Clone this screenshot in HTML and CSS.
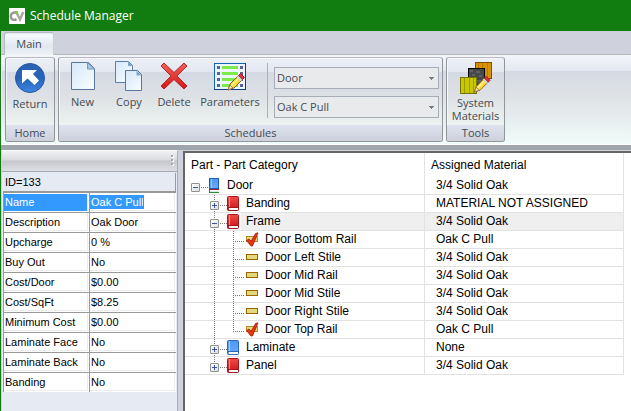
FILE: index.html
```
<!DOCTYPE html>
<html lang="en">
<head>
<meta charset="utf-8">
<title>Schedule Manager</title>
<link rel="stylesheet" href="styles.css">
</head>
<body>
<svg class="defs" aria-hidden="true">
  <defs>
    <linearGradient id="blue" x2="0" y2="1"><stop stop-color="#2c62b4"/><stop offset=".5" stop-color="#2562b8"/><stop offset="1" stop-color="#3f85e2"/></linearGradient>
    <linearGradient id="paper" x2="1" y2="1"><stop stop-color="#d4e8fb"/><stop offset="1" stop-color="#fafdff"/></linearGradient>
    <linearGradient id="red" x2="0" y2="1"><stop stop-color="#ee625b"/><stop offset="1" stop-color="#d61515"/></linearGradient>
    <linearGradient id="bookred" x2="0" y2="1"><stop stop-color="#f04c48"/><stop offset="1" stop-color="#c8141c"/></linearGradient>
    <linearGradient id="bookblue" x2="0" y2="1"><stop stop-color="#4e98f4"/><stop offset="1" stop-color="#69aaf8"/></linearGradient>
  </defs>
  <symbol id="book-red" viewBox="0 0 14 15"><rect x=".5" y=".5" width="11" height="14" rx="1" fill="url(#bookred)" stroke="#a5161b"/><path d="M2.5 1v11" stroke="#ff8a84"/><path d="M2 13h9" stroke="#fff" stroke-width="2"/><path d="M1 11.5h10" stroke="#a5161b"/></symbol>
  <symbol id="book-blue" viewBox="0 0 14 15"><rect x=".5" y=".5" width="11" height="14" rx="1" fill="url(#bookblue)" stroke="#2769bb"/><path d="M2.5 1v11" stroke="#a5ceff"/><path d="M2 13h9" stroke="#fff" stroke-width="2"/><path d="M1 11.5h10" stroke="#2769bb"/></symbol>
  <symbol id="book-stack" viewBox="0 0 14 15"><rect x="1.5" y=".5" width="9" height="10" fill="url(#bookblue)" stroke="#1d5fae"/><path d="M3.500 1v9" stroke="#9cc8ff"/><path d="M1 11.500h10" stroke="#a32035"/><path d="M1 12.500h9" stroke="#fff"/><path d="M1 14.500h10M1.500 12v3" stroke="#2d8b37"/><path d="M2 13.500h9" stroke="#dceadf"/></symbol>
  <symbol id="part" viewBox="0 0 14 15"><rect x="1.500" y="4.500" width="11" height="5" fill="#e2d87c" stroke="#9d6500"/></symbol>
  <symbol id="part-check" viewBox="0 0 14 15"><rect x="1.500" y="4.500" width="11" height="5" fill="#e2d87c" stroke="#b78a28"/><path d="M1.500 8.500L4 7l2.200 2.200L10.500 1.500 13 .8 7.500 14 6 14z" fill="#e43610" stroke="#a01c08" stroke-width=".8"/></symbol>
  <symbol id="pencil" viewBox="0 0 18 19"><path d="M1 18l2-6L12 3l4 4-9 9z" fill="#ffd936" stroke="#896118"/><path d="M1 18l2-5 3 3z" fill="#fbe0b0" stroke="#6b5b48" stroke-width=".6"/><path d="M4.500 13.500L13 5" stroke="#fff3a0" stroke-width="1.500"/><path d="M11.500 3.500l2-2 4 4-2 2z" fill="#df3036" stroke="#a91c28"/><path d="M10.500 4.500l4 4" stroke="#ccd5e0" stroke-width="2"/></symbol>
</svg>

<header class="titlebar">
  <svg class="app-icon" viewBox="0 0 16 16" aria-hidden="true"><rect width="16" height="16" fill="#fff"/><path d="M7.500 5.500C5.500 3.500 1.800 4.800 1.800 8.200S5.500 12.800 7.500 11" fill="none" stroke="#989890" stroke-width="2.400"/><path d="M8 5.500l3 6 3.200-7.500" fill="none" stroke="#aaa79b" stroke-width="2.400"/><path d="M6 3h3v3H6z" fill="#75d22c"/></svg>
  <h1>Schedule Manager</h1>
</header>
<nav class="tabs"><button class="tab" type="button">Main</button></nav>

<section class="ribbon" aria-label="Main">
  <div class="group">
    <div class="tools">
      <button class="tool return" type="button"><svg class="icon" viewBox="0 0 32 32"><circle cx="16" cy="16" r="14.500" fill="url(#blue)" stroke="#2657a0"/><path d="M8 8h15l-4 4 6 6.500-4.500 4.500-7-6.500-5.500 5z" fill="#fff"/></svg><span>Return</span></button>
    </div>
    <div class="caption">Home</div>
  </div>
  <div class="group">
    <div class="tools">
      <button class="tool new" type="button"><svg class="icon" viewBox="0 0 32 32"><path d="M4.500 2.500h17l6 6v21h-23z" fill="url(#paper)" stroke="#55779f"/><path d="M20.500 2.500v6.500h7z" fill="#a6c8e8" stroke="#7398be"/></svg><span>New</span></button>
      <button class="tool copy" type="button"><svg class="icon" viewBox="0 0 32 32"><path d="M2.500 1.500h13l4 4v17h-17z" fill="url(#paper)" stroke="#5a7fa9"/><path d="M15 1.500v4.500h4.500z" fill="#78a5cc"/><path d="M12.500 10.500h12l4 4v16h-16z" fill="url(#paper)" stroke="#55779f"/><path d="M23.500 10.500V15.500h5z" fill="#78a5cc"/></svg><span>Copy</span></button>
      <button class="tool delete" type="button"><svg class="icon" viewBox="0 0 32 32"><path d="M3 6l3-3 10 9.500L26 3l3 3-10 10 10 10-3 3-10-9.500L6 29l-3-3 10-10z" fill="url(#red)" stroke="#b52524"/></svg><span>Delete</span></button>
      <button class="tool params" type="button"><svg class="icon" viewBox="0 0 32 32"><rect x=".5" y="3.500" width="31" height="26" fill="#edf6ff" stroke="#1464b4"/><path d="M31.500 3v26.500H0" fill="none" stroke="#123e85"/><path d="M8 7.500h16M8 13.500h16M8 19.500h16M8 25.500h16" stroke="#7cea4b" stroke-width="3"/><path d="M3 7.500h3M3 13.500h3M3 19.500h3M3 25.500h3M26 7.500h3M26 13.500h3M26 19.500h3M26 25.500h3" stroke="#58619a" stroke-width="3"/><use href="#pencil" x="13" y="12" width="18" height="19"/></svg><span>Parameters</span></button>
      <div class="pickers">
        <select aria-label="Schedule type"><option>Door</option></select>
        <select aria-label="Schedule"><option>Oak C Pull</option></select>
      </div>
    </div>
    <div class="caption">Schedules</div>
  </div>
  <div class="group">
    <div class="tools">
      <button class="tool materials" type="button"><svg class="icon" viewBox="0 0 32 32"><rect x="15.500" y=".5" width="16" height="16" fill="#d79300" stroke="#805000"/><path d="M18.500 1v15M22.500 1v15M27.500 1v15" stroke="#bd7800"/><rect x="8.500" y="6.500" width="16" height="16" fill="#47484a" stroke="#050505"/><path d="M10 9h3m3 1h4m-8 3h3m4 1h3m-11 3h4m2 2h4M12 20h3" stroke="#777b80"/><rect x=".5" y="15.500" width="16" height="16" fill="#c9c800" stroke="#777300"/><path d="M4.500 16v15M9.500 16v15M13.500 16v15" stroke="#9c9c00"/><use href="#pencil" x="13" y="13" width="18" height="18"/></svg><span>System<br>Materials</span></button>
    </div>
    <div class="caption">Tools</div>
  </div>
</section>

<main class="workspace">
  <aside class="properties">
    <div class="grip" aria-hidden="true"><i></i><i></i><i></i></div>
    <h2 class="record">ID=133</h2>
    <table class="grid">
      <tbody>
        <tr class="active"><th scope="row"><label for="p0">Name</label></th><td><input id="p0" value="Oak C Pull"></td></tr>
        <tr><th scope="row"><label for="p1">Description</label></th><td><input id="p1" value="Oak Door"></td></tr>
        <tr><th scope="row"><label for="p2">Upcharge</label></th><td><input id="p2" value="0 %"></td></tr>
        <tr><th scope="row"><label for="p3">Buy Out</label></th><td><input id="p3" value="No"></td></tr>
        <tr><th scope="row"><label for="p4">Cost/Door</label></th><td><input id="p4" value="$0.00"></td></tr>
        <tr><th scope="row"><label for="p5">Cost/SqFt</label></th><td><input id="p5" value="$8.25"></td></tr>
        <tr><th scope="row"><label for="p6">Minimum Cost</label></th><td><input id="p6" value="$0.00"></td></tr>
        <tr><th scope="row"><label for="p7">Laminate Face</label></th><td><input id="p7" value="No"></td></tr>
        <tr><th scope="row"><label for="p8">Laminate Back</label></th><td><input id="p8" value="No"></td></tr>
        <tr><th scope="row"><label for="p9">Banding</label></th><td><input id="p9" value="No"></td></tr>
      </tbody>
    </table>
  </aside>

  <section class="parts">
    <table class="tree">
      <colgroup><col class="col-part"><col class="col-material"><col></colgroup>
      <thead><tr><th scope="col">Part - Part Category</th><th scope="col">Assigned Material</th><td></td></tr></thead>
      <tbody>
        <tr class="top"><td><div class="node root"><button class="toggle open" type="button" aria-label="Collapse Door"></button><i class="link"></i><svg class="glyph"><use href="#book-stack"/></svg><span>Door</span></div></td><td>3/4 Solid Oak</td><td></td></tr>
        <tr><td><div class="node branch"><button class="toggle" type="button" aria-label="Expand Banding"></button><i class="link"></i><svg class="glyph"><use href="#book-red"/></svg><span>Banding</span></div></td><td>MATERIAL NOT ASSIGNED</td><td></td></tr>
        <tr class="current"><td><div class="node branch"><button class="toggle open" type="button" aria-label="Collapse Frame"></button><i class="link"></i><svg class="glyph"><use href="#book-red"/></svg><span>Frame</span></div></td><td>3/4 Solid Oak</td><td></td></tr>
        <tr><td><div class="node leaf"><i class="elbow"></i><svg class="glyph"><use href="#part-check"/></svg><span>Door Bottom Rail</span></div></td><td>Oak C Pull</td><td></td></tr>
        <tr><td><div class="node leaf"><i class="elbow"></i><svg class="glyph"><use href="#part"/></svg><span>Door Left Stile</span></div></td><td>3/4 Solid Oak</td><td></td></tr>
        <tr><td><div class="node leaf"><i class="elbow"></i><svg class="glyph"><use href="#part"/></svg><span>Door Mid Rail</span></div></td><td>3/4 Solid Oak</td><td></td></tr>
        <tr><td><div class="node leaf"><i class="elbow"></i><svg class="glyph"><use href="#part"/></svg><span>Door Mid Stile</span></div></td><td>3/4 Solid Oak</td><td></td></tr>
        <tr><td><div class="node leaf"><i class="elbow"></i><svg class="glyph"><use href="#part"/></svg><span>Door Right Stile</span></div></td><td>3/4 Solid Oak</td><td></td></tr>
        <tr><td><div class="node leaf last"><i class="elbow"></i><svg class="glyph"><use href="#part-check"/></svg><span>Door Top Rail</span></div></td><td>Oak C Pull</td><td></td></tr>
        <tr><td><div class="node branch"><button class="toggle" type="button" aria-label="Expand Laminate"></button><i class="link"></i><svg class="glyph"><use href="#book-blue"/></svg><span>Laminate</span></div></td><td>None</td><td></td></tr>
        <tr><td><div class="node branch last"><button class="toggle" type="button" aria-label="Expand Panel"></button><i class="link"></i><svg class="glyph"><use href="#book-red"/></svg><span>Panel</span></div></td><td>3/4 Solid Oak</td><td></td></tr>
      </tbody>
    </table>
  </section>
</main>
</body>
</html>
```
FILE: styles.css
```
* { box-sizing: border-box; }

body {
  margin: 0;
  height: 100vh;
  display: flex;
  flex-direction: column;
  overflow: hidden;
  border-left: 1px solid #117d11;
  background: #cfd2dc;
  font: 11px/16px "Open Sans", "Noto Sans", sans-serif;
  color: #444b54;
}

button, input, select { font: inherit; color: inherit; }
button { padding: 0; border: 0; background: none; }
.defs { position: absolute; width: 0; height: 0; }

.titlebar {
  height: 31px;
  flex: none;
  display: flex;
  align-items: center;
  gap: 5px;
  padding-left: 8px;
  background: #117d11;
  color: #fff;
}
.titlebar h1 { margin: 0; font: 12px/16px "Open Sans", sans-serif; }
.app-icon { width: 16px; height: 16px; }

.tabs {
  height: 24px;
  flex: none;
  padding: 1px 3px 0;
  border-bottom: 1px solid #b5b9c0;
}
.tab {
  width: 50px;
  height: 23px;
  border: 1px solid #b2b9c3;
  border-right-color: #9fe3ea;
  border-bottom: 0;
  border-radius: 3px 3px 0 0;
  background: linear-gradient(#e9eaf0, #f4fafc 10%, #e2e7f0 60%, #edf3f7);
}

.ribbon {
  height: 90px;
  flex: none;
  display: flex;
  gap: 3px;
  padding: 2px 3px;
  border-left: 1px solid #fff;
  border-bottom: 1px solid #fff;
  background: linear-gradient(#f4f6fa, #e3e7f0 16px, #d5d9e4 16px, #dee2e5 40px, #e9f1f1 70px, #f0fcfa);
}
.group {
  display: flex;
  flex-direction: column;
  border: 1px solid #92959a;
  border-top-color: #b7babf;
  border-radius: 3px;
  box-shadow: inset 1px 1px #f5f7fa;
  background: linear-gradient(#edf0f6, #e3e7f0 14px, #d5d9e4 14px, #dee2e5 40px, #edf3f0 68px);
}
.tools { flex: 1; display: flex; }
.caption {
  height: 16px;
  text-align: center;
  border-radius: 0 0 2px 2px;
  background: linear-gradient(#dfe3ee, #cbd0d9);
}
.tool {
  display: flex;
  flex-direction: column;
  align-items: center;
  gap: 2px;
  padding-top: 2px;
}
.return { width: 48px; padding-top: 4px; }
.new { width: 47px; }
.copy { width: 46px; }
.delete { width: 44px; }
.params { width: 68px; }
.materials { width: 57px; line-height: 13px; padding-top: 4px; }
.icon { width: 32px; height: 32px; }
.pickers {
  display: flex;
  flex-direction: column;
  gap: 7px;
  margin: 5px 3px 0;
  padding: 4px 0 0 6px;
  height: 55px;
  border-left: 1px solid #abb0b8;
}
.pickers select {
  appearance: none;
  width: 165px;
  height: 22px;
  padding: 0 2px;
  border: 1px solid #a7adb6;
  border-radius: 0;
  background:
    linear-gradient(#777c82 0 0) no-repeat right 4px top 9px / 5px 1px,
    linear-gradient(#777c82 0 0) no-repeat right 5px top 10px / 3px 1px,
    linear-gradient(#777c82 0 0) no-repeat right 6px top 11px / 1px 1px,
    #e8eaeb;
}

.workspace {
  flex: 1;
  min-height: 0;
  display: flex;
  gap: 5px;
  padding-left: 1px;
  border-top: 5px solid #a0a5ad;
  color: #000;
  font-family: "Liberation Sans", Arial, sans-serif;
}
.properties {
  width: 176px;
  flex: none;
  border-top: 1px solid #f9fafa;
  border-right: 1px solid #a8acb6;
  background: #e6eaf3;
}
.grip {
  height: 21px;
  display: flex;
  flex-direction: column;
  align-items: flex-end;
  gap: 2px;
  padding: 4px 4px 0;
  border-bottom: 1px solid #a5a9af;
  background: linear-gradient(#f0f1f3, #d9dbdf 45%, #c5c7cd 50%, #dde0e4);
}
.grip i { width: 2px; height: 2px; background: #a5a9b0; box-shadow: 1px 1px #fff; }
.record {
  margin: 1px 1px 0;
  height: 19px;
  padding-left: 2px;
  border-right: 1px solid #999;
  border-bottom: 1px solid #999;
  font: 11px/18px "Liberation Sans", Arial, sans-serif;
}
.grid {
  width: 173px;
  margin-left: 1px;
  border-collapse: collapse;
  table-layout: fixed;
}
.grid th, .grid td {
  height: 20px;
  padding: 0 0 0 1px;
  border: 0;
  background: #fff;
  box-shadow: inset 1px 1px #999, inset -1px -1px #fff, inset -2px -2px #ececec;
  font-weight: normal;
  text-align: left;
}
.grid th { width: 86px; }
.grid label { display: block; margin: 1px 2px 1px 0; padding-left: 1px; line-height: 17px; }
.grid input {
  display: block;
  width: 82px;
  height: 16px;
  padding: 0 0 0 1px;
  border: 0;
  background: none;
  outline: 0;
}
.active label, .grid .active input { background: #3399ff; color: #fff; }
.grid .active input { width: 54px; height: 14px; border-right: 1px solid #d26a1f; }

.parts {
  flex: 1;
  min-width: 0;
  margin-top: 1px;
  border-top: 2px solid #666;
  border-left: 2px solid #666;
  background: #fff;
  font-size: 12px;
}
.tree {
  width: 100%;
  border-collapse: separate;
  border-spacing: 0;
  table-layout: fixed;
}
.col-part { width: 240px; }
.col-material { width: 199px; }
.tree th {
  height: 24px;
  padding: 0 6px;
  border-right: 1px solid #e2e2e2;
  font-weight: normal;
  text-align: left;
}
.tree td { padding: 0; }
.tree tbody td { height: 18px; border-bottom: 1px solid #e2e2e2; line-height: 17px; }
.tree tbody td:nth-child(3) { border-bottom: 0; }
.tree tbody td:nth-child(-n+2) { border-right: 1px solid #e2e2e2; }
.tree tbody td:nth-child(2) { padding-left: 11px; }
.current td:nth-child(2), .current .node span { background: #efefef; }
.node { display: flex; align-items: center; height: 17px; }
.node span { flex: 1; padding-left: 5px; }
.root { padding-left: 6px; }
.branch, .leaf { background: repeating-linear-gradient(#777 0 1px, #0000 1px 2px) no-repeat 29px 0 / 1px 18px; }
.branch { padding-left: 25px; }
.branch.last { background-size: 1px 6px; }
.leaf { padding-left: 48px; }
.toggle {
  width: 9px;
  height: 9px;
  flex: none;
  margin-top: 4px;
  border: 1px solid #919191;
  border-radius: 1px;
  background:
    linear-gradient(#3d55a5 0 0) no-repeat center / 5px 1px,
    linear-gradient(#3d55a5 0 0) no-repeat center / 1px 5px,
    linear-gradient(135deg, #fff, #ddd);
}
.toggle.open {
  background:
    linear-gradient(#3d55a5 0 0) no-repeat center / 5px 1px,
    linear-gradient(135deg, #fff, #ddd);
}
.link {
  width: 8px;
  height: 1px;
  margin-top: 4px;
  background: repeating-linear-gradient(90deg, #0000 0 1px, #777 1px 2px);
}
.elbow {
  width: 12px;
  height: 17px;
  background:
    repeating-linear-gradient(#777 0 1px, #0000 1px 2px) no-repeat 0 0 / 1px 100%,
    repeating-linear-gradient(90deg, #777 0 1px, #0000 1px 2px) no-repeat 0 10px / 11px 1px;
}
.last .elbow {
  background:
    repeating-linear-gradient(#777 0 1px, #0000 1px 2px) no-repeat 0 0 / 1px 10px,
    repeating-linear-gradient(90deg, #777 0 1px, #0000 1px 2px) no-repeat 0 10px / 11px 1px;
}
.glyph { width: 14px; height: 15px; flex: none; }
.leaf span { padding-left: 6px; }
```
